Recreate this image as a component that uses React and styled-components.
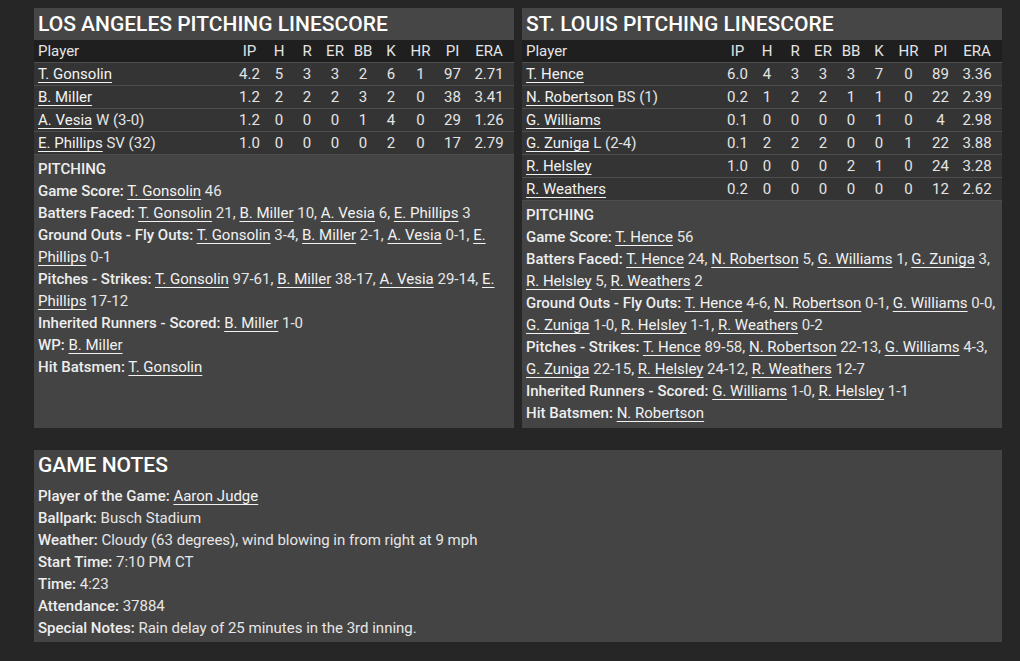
import React from "react";
import styled, { createGlobalStyle } from "styled-components";

const GlobalStyle = createGlobalStyle`
  html, body {
    margin: 0;
    padding: 0;
    background: #262626;
  }
  body {
    font-family: Roboto, "Liberation Sans", sans-serif;
    color: #e6e6e6;
    font-size: 15px;
  }
`;

const laTeam = {
  title: "LOS ANGELES PITCHING LINESCORE",
  pitchers: [
    { name: "T. Gonsolin", note: "", s: ["4.2", 5, 3, 3, 2, 6, 1, 97, "2.71"] },
    { name: "B. Miller", note: "", s: ["1.2", 2, 2, 2, 3, 2, 0, 38, "3.41"] },
    { name: "A. Vesia", note: "W (3-0)", s: ["1.2", 0, 0, 0, 1, 4, 0, 29, "1.26"] },
    { name: "E. Phillips", note: "SV (32)", s: ["1.0", 0, 0, 0, 0, 2, 0, 17, "2.79"] },
  ],
  notes: [
    { label: "Game Score", items: [["T. Gonsolin", "46"]] },
    {
      label: "Batters Faced",
      items: [["T. Gonsolin", "21"], ["B. Miller", "10"], ["A. Vesia", "6"], ["E. Phillips", "3"]],
    },
    {
      label: "Ground Outs - Fly Outs",
      items: [["T. Gonsolin", "3-4"], ["B. Miller", "2-1"], ["A. Vesia", "0-1"], ["E. Phillips", "0-1"]],
    },
    {
      label: "Pitches - Strikes",
      items: [["T. Gonsolin", "97-61"], ["B. Miller", "38-17"], ["A. Vesia", "29-14"], ["E. Phillips", "17-12"]],
    },
    { label: "Inherited Runners - Scored", items: [["B. Miller", "1-0"]] },
    { label: "WP", items: [["B. Miller", ""]] },
    { label: "Hit Batsmen", items: [["T. Gonsolin", ""]] },
  ],
};

const stlTeam = {
  title: "ST. LOUIS PITCHING LINESCORE",
  pitchers: [
    { name: "T. Hence", note: "", s: ["6.0", 4, 3, 3, 3, 7, 0, 89, "3.36"] },
    { name: "N. Robertson", note: "BS (1)", s: ["0.2", 1, 2, 2, 1, 1, 0, 22, "2.39"] },
    { name: "G. Williams", note: "", s: ["0.1", 0, 0, 0, 0, 1, 0, 4, "2.98"] },
    { name: "G. Zuniga", note: "L (2-4)", s: ["0.1", 2, 2, 2, 0, 0, 1, 22, "3.88"] },
    { name: "R. Helsley", note: "", s: ["1.0", 0, 0, 0, 2, 1, 0, 24, "3.28"] },
    { name: "R. Weathers", note: "", s: ["0.2", 0, 0, 0, 0, 0, 0, 12, "2.62"] },
  ],
  notes: [
    { label: "Game Score", items: [["T. Hence", "56"]] },
    {
      label: "Batters Faced",
      items: [
        ["T. Hence", "24"],
        ["N. Robertson", "5"],
        ["G. Williams", "1"],
        ["G. Zuniga", "3"],
        ["R. Helsley", "5"],
        ["R. Weathers", "2"],
      ],
    },
    {
      label: "Ground Outs - Fly Outs",
      items: [
        ["T. Hence", "4-6"],
        ["N. Robertson", "0-1"],
        ["G. Williams", "0-0"],
        ["G. Zuniga", "1-0"],
        ["R. Helsley", "1-1"],
        ["R. Weathers", "0-2"],
      ],
    },
    {
      label: "Pitches - Strikes",
      items: [
        ["T. Hence", "89-58"],
        ["N. Robertson", "22-13"],
        ["G. Williams", "4-3"],
        ["G. Zuniga", "22-15"],
        ["R. Helsley", "24-12"],
        ["R. Weathers", "12-7"],
      ],
    },
    { label: "Inherited Runners - Scored", items: [["G. Williams", "1-0"], ["R. Helsley", "1-1"]] },
    { label: "Hit Batsmen", items: [["N. Robertson", ""]] },
  ],
};

const columns = ["IP", "H", "R", "ER", "BB", "K", "HR", "PI", "ERA"];

function TeamPanel({ team }) {
  return (
    <Panel>
      <PanelTitle>{team.title}</PanelTitle>
      <HeadRow>
        <PlayerCell>Player</PlayerCell>
        {columns.map((c) => (
          <StatCell key={c}>{c}</StatCell>
        ))}
      </HeadRow>
      {team.pitchers.map((p) => (
        <Row key={p.name}>
          <PlayerCell>
            <Link href="#">{p.name}</Link>
            {p.note && " " + p.note}
          </PlayerCell>
          {p.s.map((v, i) => (
            <StatCell key={i}>{v}</StatCell>
          ))}
        </Row>
      ))}
      <Notes>
        <SectionHead>PITCHING</SectionHead>
        {team.notes.map((n) => (
          <Line key={n.label}>
            <Label>{n.label}:</Label>{" "}
            {n.items.map(([name, val], i) => (
              <React.Fragment key={name}>
                <Link href="#">{name}</Link>
                {val && " " + val}
                {i < n.items.length - 1 && ", "}
              </React.Fragment>
            ))}
          </Line>
        ))}
      </Notes>
    </Panel>
  );
}

export default function App() {
  return (
    <>
      <GlobalStyle />
      <Page>
        <Columns>
          <TeamPanel team={laTeam} />
          <TeamPanel team={stlTeam} />
        </Columns>
        <GameNotes>
          <NotesTitle>GAME NOTES</NotesTitle>
          <Line>
            <Label>Player of the Game:</Label> <Link href="#">Aaron Judge</Link>
          </Line>
          <Line>
            <Label>Ballpark:</Label> Busch Stadium
          </Line>
          <Line>
            <Label>Weather:</Label> Cloudy (63 degrees), wind blowing in from right at 9 mph
          </Line>
          <Line>
            <Label>Start Time:</Label> 7:10 PM CT
          </Line>
          <Line>
            <Label>Time:</Label> 4:23
          </Line>
          <Line>
            <Label>Attendance:</Label> 37884
          </Line>
          <Line>
            <Label>Special Notes:</Label> Rain delay of 25 minutes in the 3rd inning.
          </Line>
        </GameNotes>
      </Page>
    </>
  );
}

const Page = styled.div`
  padding: 8px 18px 20px 34px;
  min-height: 661px;
  box-sizing: border-box;
  display: flex;
  flex-direction: column;
  gap: 22px;
`;

const Columns = styled.div`
  display: grid;
  grid-template-columns: 480px 480px;
  gap: 8px;
`;

const Panel = styled.div`
  display: flex;
  flex-direction: column;
  background: #444444;
`;

const PanelTitle = styled.div`
  height: 32px;
  line-height: 32px;
  padding: 0 4px;
  font-size: 21px;
  font-weight: 500;
  color: #ffffff;
  background: #464646;
`;

const HeadRow = styled.div`
  display: grid;
  grid-template-columns: 1fr 31px 28px 28px 28px 28px 28px 31px 33px 40px;
  padding: 0 5px 0 4px;
  height: 22px;
  line-height: 22px;
  background: #1f1f1f;
  color: #e4e4e4;
  border-bottom: 1px solid #4e4e4e;
`;

const Row = styled(HeadRow)`
  background: #343434;
`;

const PlayerCell = styled.div`
  white-space: nowrap;
`;

const StatCell = styled.div`
  text-align: center;
  white-space: nowrap;
`;

const Link = styled.a`
  color: #f2f2f2;
  text-decoration: underline;
  text-underline-offset: 3px;
`;

const Notes = styled.div`
  flex: 1;
  padding: 3px 6px 4px 4px;
  background: #444444;
`;

const SectionHead = styled.div`
  line-height: 22px;
  font-weight: 500;
  color: #eeeeee;
`;

const Line = styled.div`
  line-height: 22px;
  color: #e6e6e6;
`;

const Label = styled.span`
  font-weight: 500;
  color: #eeeeee;
`;

const GameNotes = styled.div`
  width: 968px;
  box-sizing: border-box;
  background: #444444;
  padding: 0 4px 3px 4px;
`;

const NotesTitle = styled.div`
  height: 30px;
  line-height: 30px;
  margin-bottom: 5px;
  font-size: 21px;
  font-weight: 500;
  color: #ffffff;
`;
